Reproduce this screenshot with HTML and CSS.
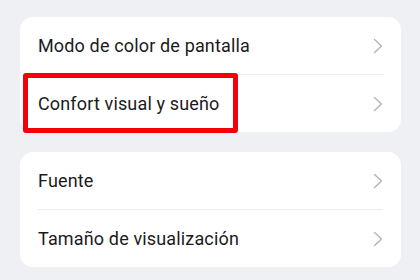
FILE: index.html
```html
<!DOCTYPE html>
<html lang="es">
<head>
<meta charset="utf-8">
<link rel="stylesheet" href="styles.css">
</head>
<body>
<div class="page">
  <div class="card">
    <div class="row"><span class="label">Modo de color de pantalla</span><svg class="chev" viewBox="0 0 10 16" width="10" height="16"><path d="M1.5 1.5 L8.5 8 L1.5 14.5" fill="none" stroke="#b4b4b4" stroke-width="1.4" stroke-linecap="round" stroke-linejoin="round"/></svg></div>
    <div class="divider"></div>
    <div class="row"><span class="label">Confort visual y sueño</span><svg class="chev" viewBox="0 0 10 16" width="10" height="16"><path d="M1.5 1.5 L8.5 8 L1.5 14.5" fill="none" stroke="#b4b4b4" stroke-width="1.4" stroke-linecap="round" stroke-linejoin="round"/></svg></div>
    <div class="highlight"></div>
  </div>
  <div class="card">
    <div class="row"><span class="label">Fuente</span><svg class="chev" viewBox="0 0 10 16" width="10" height="16"><path d="M1.5 1.5 L8.5 8 L1.5 14.5" fill="none" stroke="#b4b4b4" stroke-width="1.4" stroke-linecap="round" stroke-linejoin="round"/></svg></div>
    <div class="divider"></div>
    <div class="row"><span class="label">Tamaño de visualización</span><svg class="chev" viewBox="0 0 10 16" width="10" height="16"><path d="M1.5 1.5 L8.5 8 L1.5 14.5" fill="none" stroke="#b4b4b4" stroke-width="1.4" stroke-linecap="round" stroke-linejoin="round"/></svg></div>
  </div>
</div>
</body>
</html>
```
FILE: styles.css
```css
html, body {
  margin: 0;
  padding: 0;
  background: #eff0f3;
}
body {
  font-family: Roboto, "Noto Sans", sans-serif;
  color: #1b1b1b;
}
.page {
  padding: 17px 19px 0 20px;
  display: flex;
  flex-direction: column;
  gap: 20px;
}
.card {
  position: relative;
  background: #ffffff;
  border-radius: 13px;
  padding: 0 18px;
}
.row {
  height: 57px;
  display: flex;
  align-items: center;
  justify-content: space-between;
}
.label {
  font-size: 18px;
  letter-spacing: 0.15px;
}
.chev {
  display: block;
}
.divider {
  height: 1px;
  background: #ececee;
}
.highlight {
  position: absolute;
  left: 3px;
  top: 56px;
  width: 205px;
  height: 50px;
  border: 5.5px solid #f5000a;
  border-radius: 3px;
}
```
